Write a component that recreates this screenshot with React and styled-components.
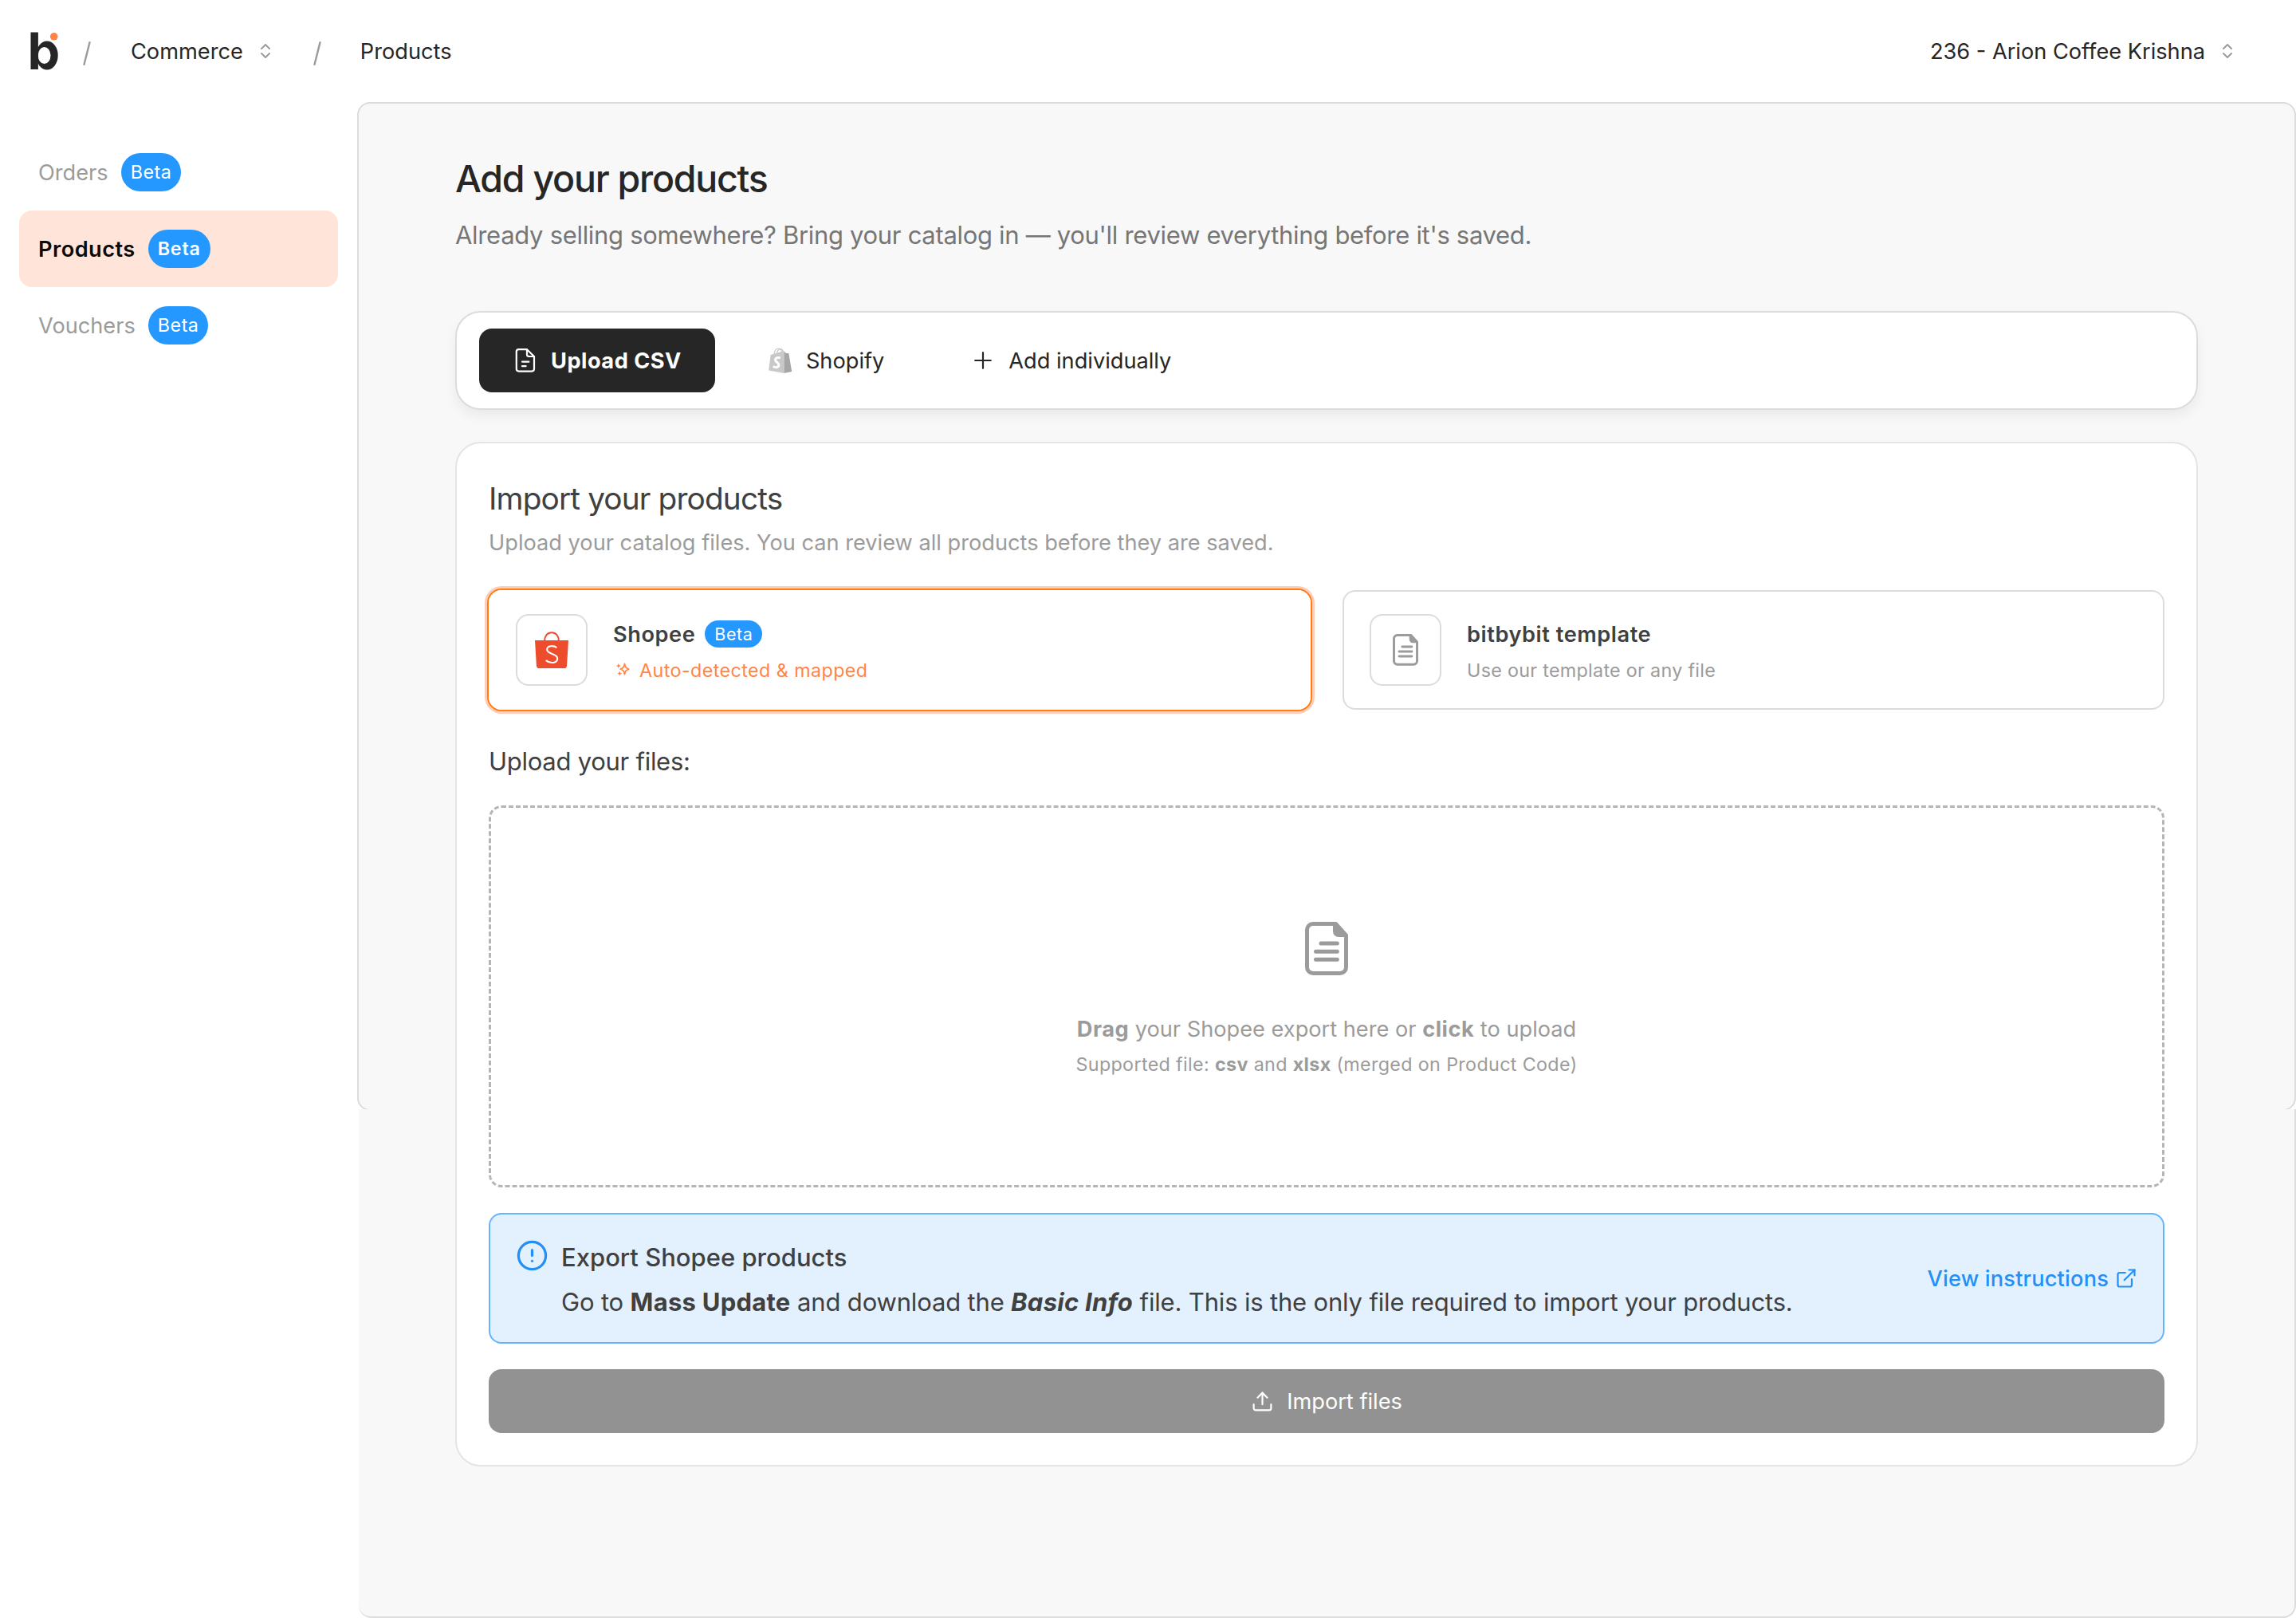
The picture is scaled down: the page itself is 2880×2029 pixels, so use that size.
import React from 'react'
import styled, { createGlobalStyle } from 'styled-components'
import { CircleAlert, ExternalLink, Upload } from 'lucide-react'

const BrandLogo = () => (
  <svg width="36" height="48" viewBox="0 0 36 48">
    <ellipse cx="21" cy="29.5" rx="13.7" ry="17.9" fill="#262626" />
    <ellipse cx="17.6" cy="29.5" rx="7.9" ry="10.5" fill="#fff" />
    <rect x="0.5" y="0.5" width="9.4" height="46.5" fill="#262626" />
    <circle cx="29.7" cy="5.8" r="4.8" fill="#ff8341" />
  </svg>
)

const SlashIcon = () => (
  <svg width="10" height="30" viewBox="0 0 10 30" fill="none" stroke="#9b9b9b" strokeWidth="2.4">
    <path d="M1.3 29.7 8.7 0.3" />
  </svg>
)

const SorterIcon = () => (
  <svg width="14" height="20" viewBox="0 0 14 20" fill="none" stroke="#9b9b9b" strokeWidth="2" strokeLinecap="round" strokeLinejoin="round">
    <path d="M2 7 7 2l5 5M2 13l5 5 5-5" />
  </svg>
)

const CsvIcon = () => (
  <svg width="32" height="32" viewBox="0 0 32 32" fill="none" stroke="#fff" strokeWidth="2.2" strokeLinecap="round" strokeLinejoin="round">
    <path d="M7.5 2.2H18L27 11v15.6a3 3 0 0 1-3 3H7.8a3 3 0 0 1-3-3V5a2.8 2.8 0 0 1 2.8-2.8Z" />
    <path d="M18 2.6V8.5a2.5 2.5 0 0 0 2.5 2.5h6M12 17.6h8.4M12 23.2h4.6" />
  </svg>
)

const ShopifyIcon = () => (
  <svg width="32" height="34" viewBox="0 0 32 34">
    <path d="M8 9C8.6 4.6 11 2 13.4 2c2.4 0 3.8 2.6 4.4 5M11.6 8c.6-3.6 2.6-5.6 5-5.4 1.4.2 2.4 1.6 3 3.4" fill="none" stroke="#c6c6c6" strokeWidth="1.2" />
    <path d="M3.6 10 20.5 5v28L1.3 29.6Z" fill="#c8c8c8" />
    <path d="M20.5 5.6 22.8 7.8 26.4 8.2 30.2 31 20.5 33Z" fill="#a6a6a6" />
    <path d="M15.8 14c-2.8-1.4-6.2-.2-6.2 2.5 0 2.7 4.3 3 4.3 6 0 3.3-3.7 4.1-7.2 1.9" fill="none" stroke="#fff" strokeWidth="3" />
  </svg>
)

const PlusIcon = () => (
  <svg width="32" height="32" viewBox="0 0 32 32" fill="none" stroke="#262626" strokeWidth="2.2" strokeLinecap="round">
    <path d="M16 6.2v19.6M6.2 16h19.6" />
  </svg>
)

const ShopeeIcon = () => (
  <svg width="42" height="46" viewBox="0 0 42 46">
    <path d="M12 12C12 5.5 15.7 1.2 21 1.2S30 5.5 30 12" fill="none" stroke="#ee4d2d" strokeWidth="2" />
    <path d="M0 11h42l-1.9 31.4a3.7 3.7 0 0 1-3.7 3.6H5.6a3.7 3.7 0 0 1-3.7-3.6Z" fill="#ee4d2d" />
    <path d="M27.4 20.3c-3.8-3.3-12.2-3.1-12.2 2.3 0 6.4 13 4.3 13 11.2 0 6.4-9.4 6.6-14.4 2.3" fill="none" stroke="#fff" strokeWidth="2.1" />
  </svg>
)

const SparkleIcon = () => (
  <svg width="18" height="18" viewBox="0 0 18 18" fill="#ff8548">
    <path d="M10.5 1.3c.8 4.2 1.6 5.4 5.3 6.7-3.7 1.3-4.5 2.5-5.3 6.7-.8-4.2-1.6-5.4-5.3-6.7 3.7-1.3 4.5-2.5 5.3-6.7Z" fill="none" stroke="#ff8548" strokeWidth="1.8" strokeLinejoin="round" />
    <path d="M2.8.8 3.6 3 5.6 4 3.6 5 2.8 7.2 2 5 0 4 2 3ZM4.3 10.4l.8 2.2 2 1-2 1-.8 2.2-.8-2.2-2-1 2-1Z" />
  </svg>
)

const DocumentIcon = ({ width }) => (
  <svg width={width} viewBox="0 0 54 67" fill="none" stroke="#9b9b9b" strokeWidth="5" strokeLinecap="round">
    <path d="M10 2.5H38.5L51.5 17V57a7.5 7.5 0 0 1-7.5 7.5H10A7.5 7.5 0 0 1 2.5 57V10A7.5 7.5 0 0 1 10 2.5Z" strokeLinejoin="round" />
    <path d="M35 2.5h4L51.5 16v3H42a7 7 0 0 1-7-7Z" fill="#9b9b9b" stroke="none" />
    <path d="M20 27h20.3M13.5 37.2h26.8M13.5 47.2h26.8" />
  </svg>
)

const navItems = [
  { label: 'Orders' },
  { label: 'Products', active: true },
  { label: 'Vouchers' },
]

const App = () => {
  return (
    <>
      <GlobalStyle />
      <Page>
        <Header>
          <BrandLogo />
          <Separator $before={30}><SlashIcon /></Separator>
          <Crumb $before={50}>Commerce</Crumb>
          <Sorter><SorterIcon /></Sorter>
          <Separator $before={53}><SlashIcon /></Separator>
          <Crumb $before={49}>Products</Crumb>
          <Account>
            236 - Arion Coffee Krishna
            <Sorter><SorterIcon /></Sorter>
          </Account>
        </Header>
        <Body>
          <Sidebar>
            {navItems.map((item) => (
              <NavItem key={item.label} $active={item.active}>
                {item.label}
                <NavBadge $active={item.active}>Beta</NavBadge>
              </NavItem>
            ))}
          </Sidebar>
          <Main>
            <Frame>
              <Content>
                <Title>Add your products</Title>
                <Subtitle>Already selling somewhere? Bring your catalog in — you'll review everything before it's saved.</Subtitle>
                <Tabs>
                  <Tab $active><CsvIcon />Upload CSV</Tab>
                  <Tab><ShopifyIcon />Shopify</Tab>
                  <Tab><PlusIcon />Add individually</Tab>
                </Tabs>
                <Card>
                  <CardTitle>Import your products</CardTitle>
                  <CardText>Upload your catalog files. You can review all products before they are saved.</CardText>
                  <Sources>
                    <Source $selected>
                      <SourceIcon><ShopeeIcon /></SourceIcon>
                      <SourceBody>
                        <SourceName>Shopee <SourceBadge>Beta</SourceBadge></SourceName>
                        <SourceNote $accent><SparkleIcon />Auto-detected &amp; mapped</SourceNote>
                      </SourceBody>
                    </Source>
                    <Source>
                      <SourceIcon><DocumentIcon width="32" /></SourceIcon>
                      <SourceBody>
                        <SourceName>bitbybit template</SourceName>
                        <SourceNote>Use our template or any file</SourceNote>
                      </SourceBody>
                    </Source>
                  </Sources>
                  <UploadLabel>Upload your files:</UploadLabel>
                  <DropZone>
                    <DocumentIcon width="54" />
                    <DropText><b>Drag</b> your Shopee export here or <b>click</b> to upload</DropText>
                    <DropHint>Supported file: <b>csv</b> and <b>xlsx</b> (merged on Product Code)</DropHint>
                  </DropZone>
                  <Info>
                    <CircleAlert size={41} strokeWidth={1.9} color="#2490f5" />
                    <InfoBody>
                      <InfoTitle>Export Shopee products</InfoTitle>
                      <InfoText>
                        Go to <b>Mass Update</b> and download the <b><i>Basic Info</i></b> file. This is the only file required to import your products.
                      </InfoText>
                    </InfoBody>
                    <InfoLink>View instructions<ExternalLink size={28} strokeWidth={1.9} /></InfoLink>
                  </Info>
                  <ImportButton><Upload size={29} strokeWidth={1.8} />Import files</ImportButton>
                </Card>
              </Content>
            </Frame>
            <FrameTail />
          </Main>
        </Body>
      </Page>
    </>
  )
}

export default App

const GlobalStyle = createGlobalStyle`
  * {
    box-sizing: border-box;
  }

  body {
    margin: 0;
    background: #fff;
    font-family: Inter, "Liberation Sans", sans-serif;
    font-size: 27.2px;
    color: #262626;
  }

  svg {
    flex-shrink: 0;
    display: block;
  }
`

const Page = styled.div`
  display: flex;
  flex-direction: column;
  height: 2029px;
  overflow: hidden;
`

const Header = styled.header`
  display: flex;
  align-items: center;
  height: 128px;
  flex-shrink: 0;
  padding: 0 79px 0 38px;
`

const Separator = styled.span`
  margin-left: ${(props) => props.$before}px;
  padding-top: 6px;
`

const Crumb = styled.span`
  margin-left: ${(props) => props.$before}px;
`

const Sorter = styled.span`
  margin-left: 21px;
`

const Account = styled.div`
  display: flex;
  align-items: center;
  margin-left: auto;
`

const Body = styled.div`
  display: flex;
  flex: 1;
`

const Sidebar = styled.nav`
  width: 448px;
  padding: 40px 24px;
`

const NavItem = styled.a`
  display: flex;
  align-items: center;
  gap: 16px;
  height: 96px;
  padding: 0 24px;
  border-radius: 16px;
  color: ${(props) => (props.$active ? '#0a0a0a' : '#9b9b9b')};
  font-weight: ${(props) => (props.$active ? 600 : 400)};
  letter-spacing: ${(props) => (props.$active ? '0.45px' : 0)};
  background: ${(props) => (props.$active ? '#ffe5d9' : 'transparent')};
`

const NavBadge = styled.span`
  height: 48px;
  padding: 0 12px;
  border-radius: 24px;
  background: #2498ff;
  color: #fff;
  font-size: 23.3px;
  line-height: 48px;
  letter-spacing: ${(props) => (props.$active ? '0.8px' : '0.5px')};
`

const Main = styled.main`
  display: flex;
  flex-direction: column;
  flex: 1;
`

const Frame = styled.div`
  height: 1265px;
  border: 2px solid #dcdcdc;
  border-radius: 16px;
  background: #f8f8f8;
`

/* background that carries on below the frame, behind the content */
const FrameTail = styled.div`
  flex: 1;
  margin: -2px 0 0 2px;
  border: solid #dcdcdc;
  border-width: 0 2px 2px 0;
  border-radius: 0 0 16px 16px;
  background: #f8f8f8;
`

const Content = styled.div`
  position: relative;
  z-index: 1;
  padding: 64px 121px 0;
`

const Title = styled.h1`
  margin: 0;
  font-size: 46.5px;
  line-height: 60px;
  font-weight: 500;
  letter-spacing: -1.25px;
`

const Subtitle = styled.p`
  margin: 17px 0 71px;
  font-size: 31px;
  line-height: 48px;
  letter-spacing: -0.31px;
  color: #767676;
`

const Tabs = styled.div`
  display: flex;
  gap: 24px;
  padding: 20px 28px;
  border: 2px solid #dcdcdc;
  border-radius: 32px;
  background: #fff;
  box-shadow: 0 8px 16px rgba(0, 0, 0, 0.06);
`

const Tab = styled.div`
  display: flex;
  align-items: center;
  gap: 16px;
  height: 80px;
  padding: 0 42px;
  border-radius: 16px;
  color: ${(props) => (props.$active ? '#fff' : '#262626')};
  font-weight: ${(props) => (props.$active ? 700 : 400)};
  letter-spacing: ${(props) => (props.$active ? '0.5px' : 0)};
  background: ${(props) => (props.$active ? '#262626' : 'transparent')};
`

const Card = styled.section`
  margin-top: 40px;
  padding: 40px;
  border: 2px solid #e4e4e4;
  border-radius: 32px;
  background: #fff;
  color: #404040;
`

const CardTitle = styled.h2`
  margin: 0;
  font-size: 38.8px;
  line-height: 58px;
  font-weight: 400;
  letter-spacing: -0.87px;
`

const CardText = styled.p`
  margin: 6px 0 38px;
  line-height: 42px;
  color: #9b9b9b;
`

const Sources = styled.div`
  display: grid;
  grid-template-columns: 1fr 1fr;
  gap: 40px;
`

const Source = styled.div`
  display: flex;
  align-items: center;
  gap: 32px;
  height: 150px;
  padding: 0 32px;
  border: 2px solid ${(props) => (props.$selected ? '#fff' : '#dcdcdc')};
  border-radius: 16px;
  box-shadow: ${(props) => (props.$selected ? '0 0 0 2px #ff7d14, 0 0 0 5px #ffcdb5' : 'none')};
`

const SourceIcon = styled.div`
  display: flex;
  align-items: center;
  justify-content: center;
  width: 90px;
  height: 90px;
  border: 2px solid #dcdcdc;
  border-radius: 16px;
`

const SourceBody = styled.div`
  padding-top: 2px;
`

const SourceName = styled.div`
  display: flex;
  align-items: center;
  gap: 12px;
  height: 42px;
  font-weight: 600;
  letter-spacing: 0.55px;
`

const SourceBadge = styled.span`
  padding: 0 12px;
  border-radius: 17px;
  background: #2498ff;
  color: #fff;
  font-size: 21.5px;
  line-height: 34px;
  font-weight: 400;
`

const SourceNote = styled.div`
  display: flex;
  align-items: center;
  gap: 11px;
  height: 36px;
  margin-top: 6px;
  padding-left: ${(props) => (props.$accent ? '4px' : 0)};
  font-size: 23.3px;
  letter-spacing: ${(props) => (props.$accent ? '0.42px' : '0.3px')};
  color: ${(props) => (props.$accent ? '#ff8548' : '#9b9b9b')};
`

const UploadLabel = styled.p`
  margin: 42px 0 32px;
  font-size: 31px;
  line-height: 46px;
  letter-spacing: -0.27px;
`

const DropZone = styled.div`
  display: flex;
  flex-direction: column;
  align-items: center;
  height: 479px;
  padding-top: 143px;
  border: 3px dashed #b5b5b5;
  border-radius: 16px;
  color: #9b9b9b;
`

const DropText = styled.p`
  margin: 47px 0 5px;
  line-height: 42px;

  b {
    letter-spacing: 0.5px;
  }
`

const DropHint = styled.p`
  margin: 0;
  font-size: 23.3px;
  line-height: 36px;
  letter-spacing: 0.35px;
`

const Info = styled.div`
  display: flex;
  height: 164px;
  margin-top: 32px;
  padding: 31px 32px 0;
  border: 2px solid #66b3ff;
  border-radius: 16px;
  background: #e3f1ff;
`

const InfoBody = styled.div`
  flex: 1;
  margin-left: 16px;
  font-size: 31px;
  line-height: 46px;
`

const InfoTitle = styled.div`
  font-weight: 500;
`

const InfoText = styled.div`
  margin-top: 10px;
  letter-spacing: -0.17px;

  b {
    letter-spacing: 0.25px;
  }
`

const InfoLink = styled.a`
  display: flex;
  align-items: center;
  gap: 8px;
  height: 98px;
  color: #2490f5;
  font-weight: 500;
  letter-spacing: 0.17px;
`

const ImportButton = styled.div`
  display: flex;
  align-items: center;
  justify-content: center;
  gap: 16px;
  height: 80px;
  margin-top: 32px;
  border-radius: 16px;
  background: #929292;
  color: #fff;
`
